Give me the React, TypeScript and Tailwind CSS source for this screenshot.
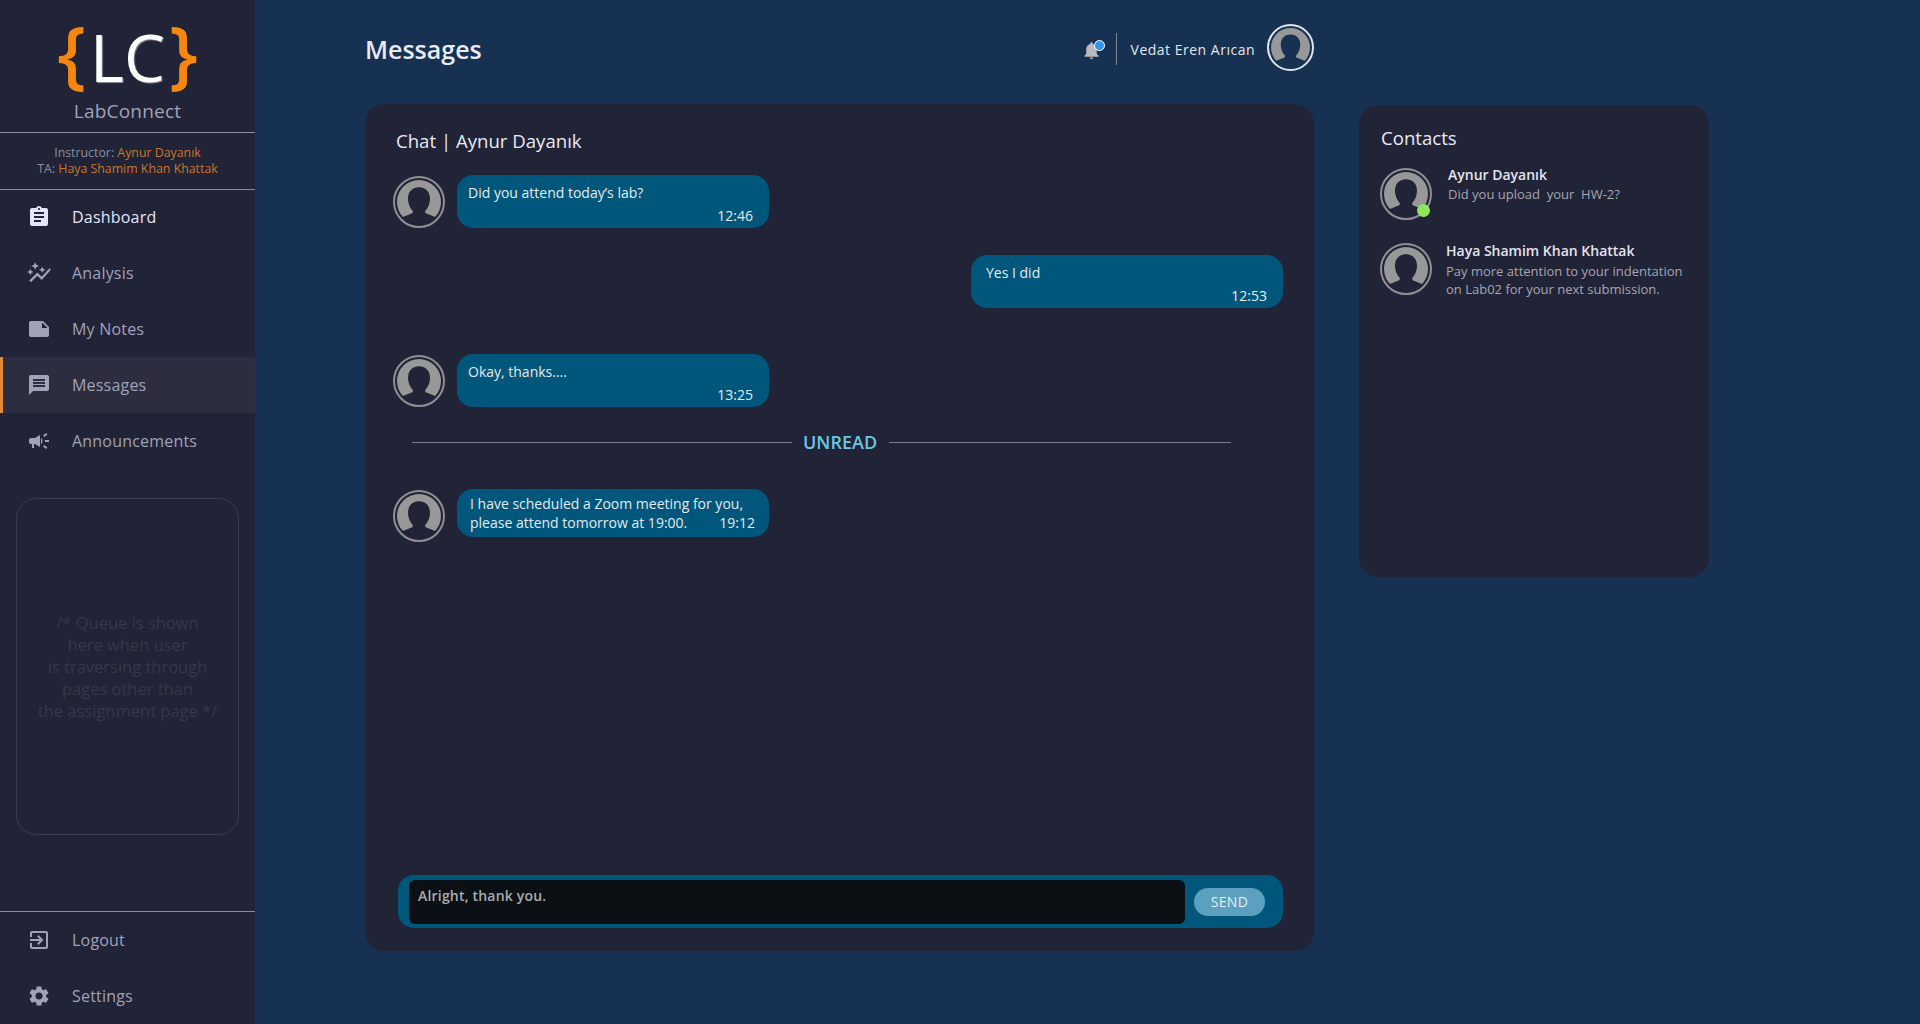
import React from 'react';
import { MdAssignment, MdAutoGraph, MdNote, MdMessage, MdCampaign, MdExitToApp, MdSettings, MdNotifications } from 'react-icons/md';

const NAV_TOP = [
  { label: 'Dashboard', icon: MdAssignment, bright: true },
  { label: 'Analysis', icon: MdAutoGraph, size: 26 },
  { label: 'My Notes', icon: MdNote },
  { label: 'Messages', icon: MdMessage, active: true },
  { label: 'Announcements', icon: MdCampaign },
];

const NAV_BOTTOM = [
  { label: 'Logout', icon: MdExitToApp },
  { label: 'Settings', icon: MdSettings },
];

interface NavItem {
  label: string;
  icon: React.ComponentType<{ size?: number; className?: string }>;
  size?: number;
  bright?: boolean;
  active?: boolean;
}

const NavRow: React.FC<{ item: NavItem }> = ({ item }) => {
  const Icon = item.icon;
  const tone = item.bright ? 'text-[#e3e5fa]' : 'text-[#a0a2b8]';
  return (
    <div className={`h-14 flex items-center pl-[24px] border-l-[3px] ${item.active ? 'bg-[#2c2e40] border-[#e58a33]' : 'border-transparent'}`}>
      <div className="w-6 mr-[21px] flex justify-center">
        <Icon size={item.size ?? 24} className={`shrink-0 ${tone}`} />
      </div>
      <span className={`text-[16px] tracking-[0.2px] ${tone}`}>{item.label}</span>
    </div>
  );
};

const Avatar: React.FC<{ small?: boolean; light?: boolean; online?: boolean }> = ({ small, light, online }) => (
  <div className={`relative shrink-0 rounded-full border-2 p-[2px] ${small ? 'w-[47px] h-[47px]' : 'w-[52px] h-[52px]'} ${light ? 'border-[#dfe3ee]' : 'border-[#8f8f94]'}`}>
    <svg viewBox="0 0 42 42" className="w-full h-full">
      <circle cx="21" cy="21" r="21" fill="#989898" />
      <path
        d="M21 7C14 7 10.500 12 10.500 18C10.500 23 12.500 27 15 29.500C15.500 30.500 15 31.500 14 32L5 35.500A21.500 21.500 0 0 0 37 35.500L28 32C27 31.500 26.500 30.500 27 29.500C29.500 27 31.500 23 31.500 18C31.500 12 28 7 21 7Z"
        fill={light ? '#163152' : '#212336'}
      />
    </svg>
    {online && <span className="absolute right-0 bottom-[1px] w-[13px] h-[13px] rounded-full bg-[#8ee85a]" />}
  </div>
);

const Bubble: React.FC<{ text: React.ReactNode; time: string; inset?: boolean }> = ({ text, time, inset }) => (
  <div className={`w-[312px] h-[53px] rounded-[16px] bg-[#00577b] pr-4 pt-[8px] relative text-[#e4eaf2] text-[14px] leading-[19px] ${inset ? 'pl-[15px]' : 'pl-[11px]'}`}>
    {text}
    <span className="absolute right-4 bottom-[3px]">{time}</span>
  </div>
);

const App: React.FC = () => {
  return (
    <div className="flex h-[1024px] w-[1920px] overflow-hidden bg-[#163152] font-['Open_Sans',sans-serif]">
      {/* Sidebar */}
      <aside className="w-[255px] shrink-0 h-full bg-[#212336] flex flex-col">
        <div className="h-[133px] flex flex-col items-center border-b border-[#8a8b9c]">
          <div className="flex items-center h-[82px] mt-[16px]">
            <span className="text-[#f5860f] text-[75px] font-semibold leading-[82px] mt-[-12px]">{'{'}</span>
            <span className="text-white text-[65px] leading-[82px] mx-[4px] [text-shadow:1px_1px_1px_#8a8b9c]">LC</span>
            <span className="text-[#f5860f] text-[75px] font-semibold leading-[82px] mt-[-12px]">{'}'}</span>
          </div>
          <span className="text-[#a0a2b8] text-[19px] tracking-[0.2px] leading-[26px]">LabConnect</span>
        </div>
        <div className="h-[57px] flex flex-col items-center justify-center border-b border-[#8a8b9c] text-[12.350px] leading-[16px] text-[#8c8e9f]">
          <div>Instructor: <span className="text-[#c7772f]">Aynur Dayanık</span></div>
          <div>TA: <span className="text-[#c7772f]">Haya Shamim Khan Khattak</span></div>
        </div>
        <nav className="mt-[-1px]">
          {NAV_TOP.map(item => <NavRow key={item.label} item={item} />)}
        </nav>
        <div className="mx-4 mt-[29px] h-[337px] rounded-[20px] border border-[#3a3c50] flex items-center justify-center text-center text-[16.500px] leading-[22px] text-[#35374b]">
          <p>
            /* Queue is shown<br />here when user<br />is traversing through<br />pages other than<br />the assignment page */
          </p>
        </div>
        <div className="mt-auto border-t border-[#8a8b9c]">
          {NAV_BOTTOM.map(item => <NavRow key={item.label} item={item} />)}
        </div>
      </aside>

      {/* Main */}
      <main className="flex-1 pl-[110px] pt-[20px]">
        <header className="w-[949px] h-[58px] flex items-center">
          <h1 className="text-[25px] font-semibold text-[#e8eaf4] mt-[1px]">Messages</h1>
          <div className="ml-auto flex items-center">
            <div className="relative mt-[2px]">
              <MdNotifications size={21} className="text-[#b9bbc0]" />
              <span className="absolute top-0 right-[-3px] w-[9px] h-[9px] rounded-full bg-[#2f95f0] border-[1.500px] border-white box-content" />
            </div>
            <div className="w-px h-8 bg-[#7b8698] ml-[14px]" />
            <span className="ml-[14px] mr-[12px] text-[14px] font-medium text-[#e3e6ee] tracking-[0.5px]">Vedat Eren Arıcan</span>
            <div className="mt-[-3px]">
              <Avatar small light />
            </div>
          </div>
        </header>

        <div className="flex mt-[26px] items-start">
          {/* Chat */}
          <section className="w-[949px] h-[847px] rounded-[20px] bg-[#212336] flex flex-col pl-[29px] pr-[31px] pb-[23px]">
            <h2 className="text-[18.600px] font-medium text-[#e8eaf4] mt-[24px] ml-[2px] leading-[25px]">Chat | Aynur Dayanık</h2>
            <div className="mt-[22px] ml-[-1px] flex items-center gap-[12px]">
              <Avatar />
              <Bubble text="Did you attend today’s lab?" time="12:46" />
            </div>
            <div className="mt-[27px] flex justify-end">
              <Bubble inset text="Yes I did" time="12:53" />
            </div>
            <div className="mt-[46px] ml-[-1px] flex items-center gap-[12px]">
              <Avatar />
              <Bubble text="Okay, thanks...." time="13:25" />
            </div>
            <div className="mt-[23px] ml-[18px] mr-[52px] flex items-center gap-[11px]">
              <div className="w-[380px] h-px bg-[#7c7d8e]" />
              <span className="text-[18px] font-semibold text-[#6fc6e3] leading-[24px]">UNREAD</span>
              <div className="flex-1 ml-[1px] h-px bg-[#7c7d8e]" />
            </div>
            <div className="mt-[35px] ml-[-1px] flex items-start gap-[12px]">
              <div className="mt-[1px]">
                <Avatar />
              </div>
              <div className="w-[312px] h-[48px] rounded-[16px] bg-[#00577b] pl-[13px] pt-[5px] relative text-[#e4eaf2] text-[14px] leading-[19px]">
                I have scheduled a Zoom meeting for you,<br />please attend tomorrow at 19:00.
                <span className="absolute right-[14px] bottom-[5px]">19:12</span>
              </div>
            </div>
            <div className="mt-auto ml-[4px] h-[53px] rounded-[16px] bg-[#00577b] flex items-center pl-[11px] pr-[18px]">
              <div className="flex-1 h-[44px] rounded-[6px] bg-[#0b1014] pl-[9px] pt-[6px] text-[14px] tracking-[0.2px] leading-[19px] font-semibold text-[#a9adb2]">
                Alright, thank you.
              </div>
              <button className="ml-[9px] w-[71px] h-[28px] rounded-full bg-[#5ba0bf] text-[#e8eef2] text-[14px] tracking-[0.3px]">SEND</button>
            </div>
          </section>

          {/* Contacts */}
          <aside className="ml-[45px] w-[350px] h-[472px] mt-[1px] rounded-[20px] bg-[#212336] pl-[21px] pr-[20px]">
            <h2 className="text-[18.600px] font-medium text-[#e8eaf4] pt-[20px] ml-[1px] leading-[25px]">Contacts</h2>
            <div className="mt-[18px] flex items-start">
              <Avatar online />
              <div className="ml-[16px] mt-[-3px] text-[14px] leading-[19px]">
                <div className="font-semibold text-[#e3e5f0]">Aynur Dayanık</div>
                <div className="mt-[1px] text-[13px] text-[#a5a6b2] whitespace-pre">Did you upload  your  HW-2?</div>
              </div>
            </div>
            <div className="mt-[23px] flex items-start">
              <Avatar />
              <div className="ml-[14px] mt-[-2px] text-[14px] leading-[19px]">
                <div className="font-semibold text-[#e3e5f0]">Haya Shamim Khan Khattak</div>
                <div className="mt-[2px] text-[13px] leading-[18px] text-[#a5a6b2]">Pay more attention to your indentation<br />on Lab02 for your next submission.</div>
              </div>
            </div>
          </aside>
        </div>
      </main>
    </div>
  );
};

export default App;
